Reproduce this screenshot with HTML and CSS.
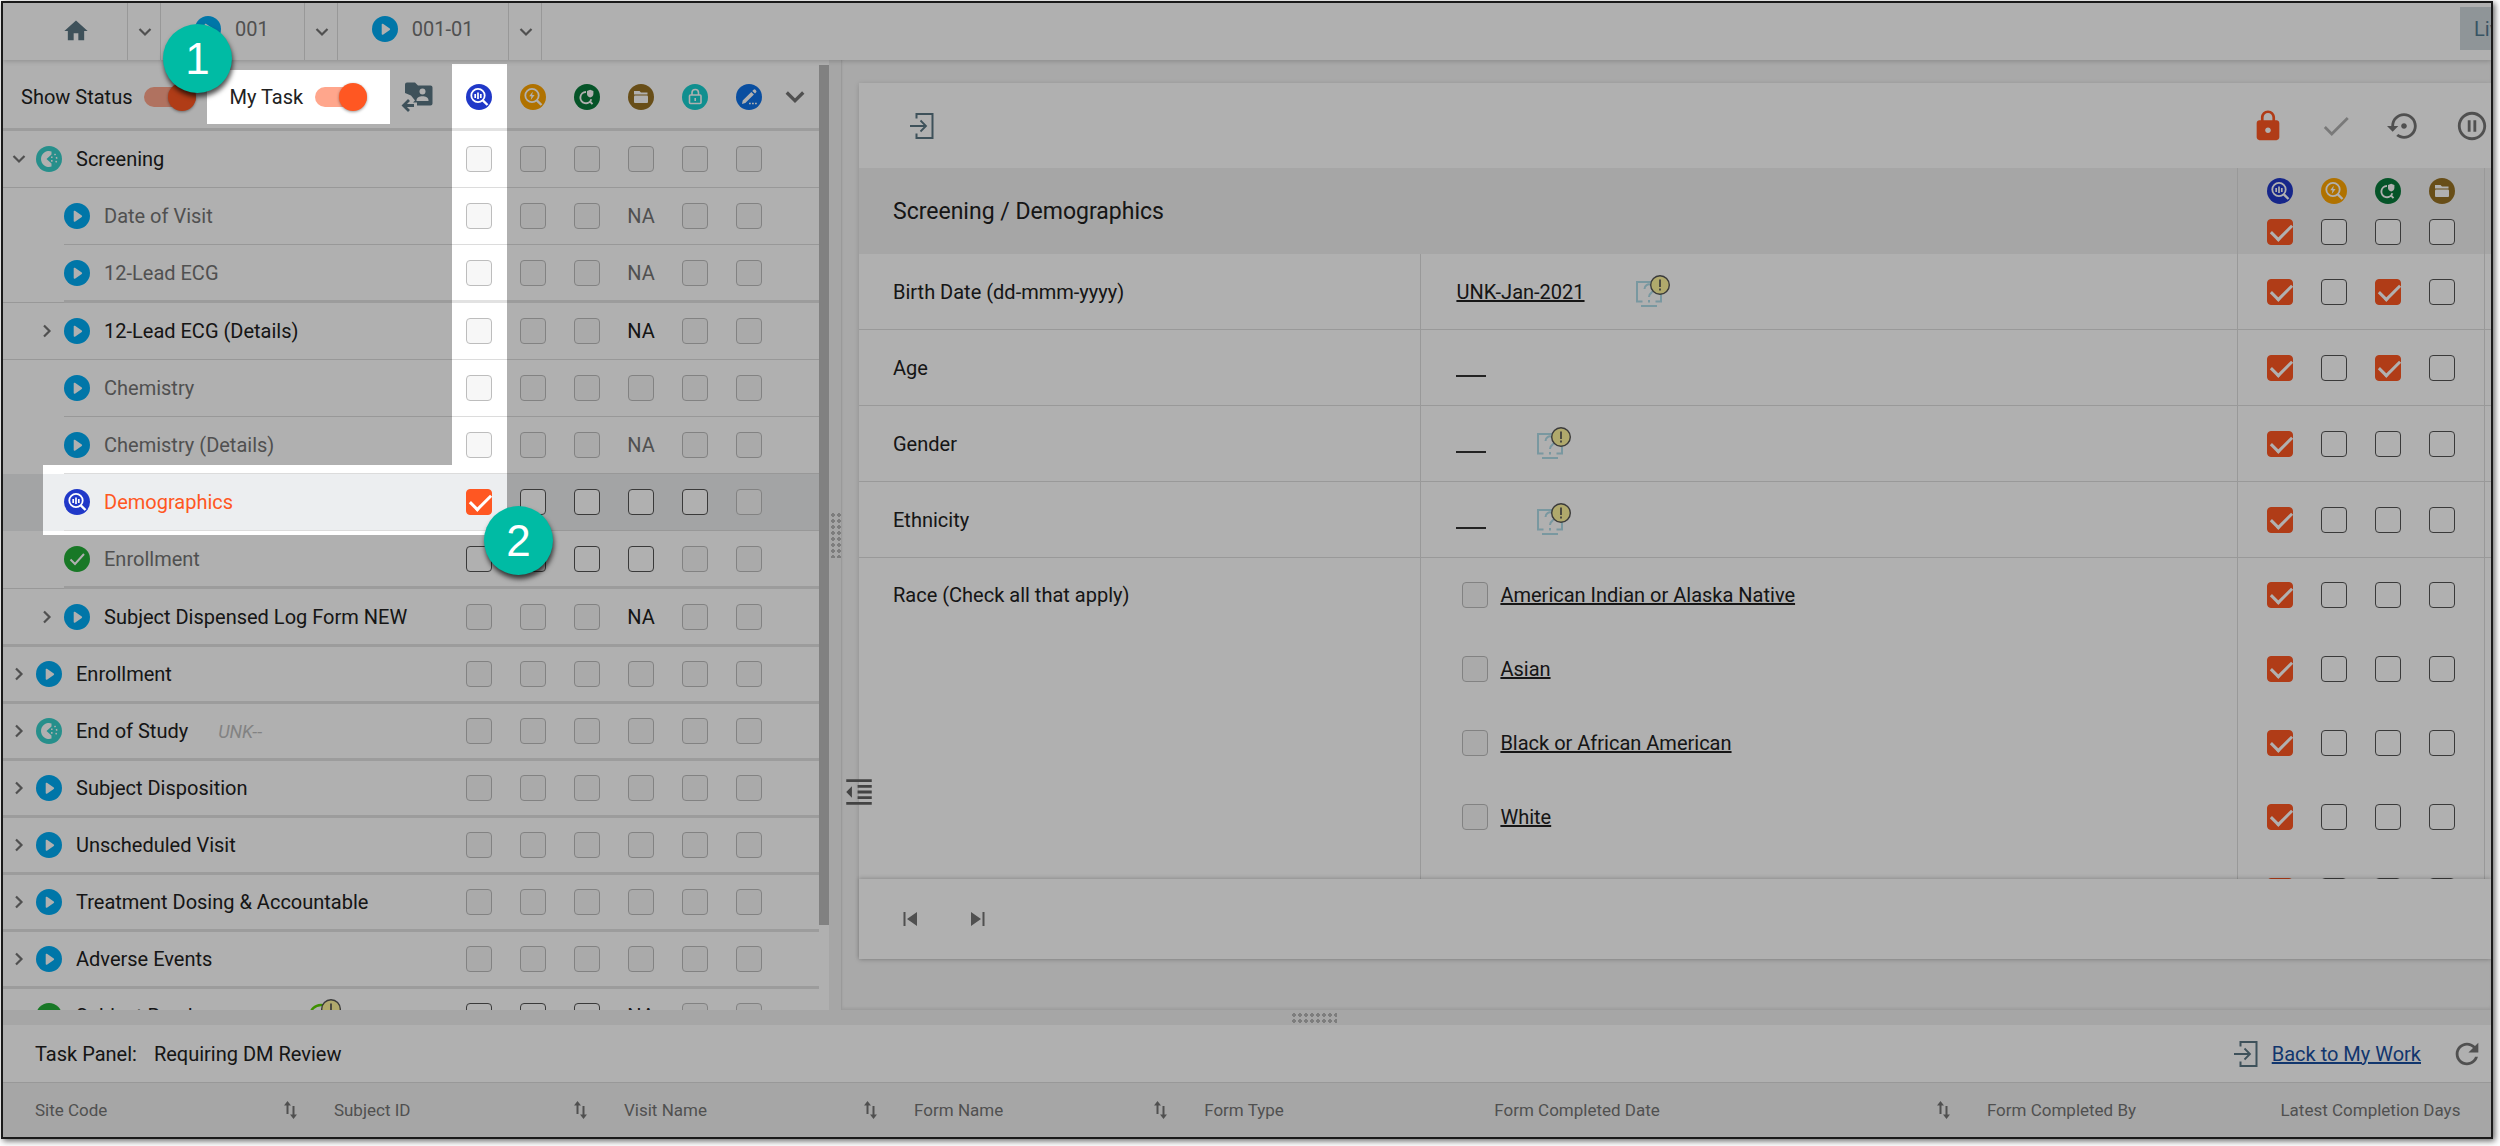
FILE: index.html
```html
<!DOCTYPE html>
<html lang="en">
<head>
    <meta charset="UTF-8">
    <meta name="viewport" content="width=device-width, initial-scale=1.0">
    <title>Subject 001-01</title>
    <link rel="stylesheet" href="styles.css">
</head>
<body>
    <svg class="sprite" aria-hidden="true">
        <symbol id="home" viewBox="0 0 24 24"><path d="M10 20v-6h4v6h5v-8h3L12 3 2 12h3v8z"/></symbol>
        <symbol id="down" viewBox="0 0 16 16"><path d="M2.5 5l5.5 5.5L13.5 5" fill="none" stroke="currentColor" stroke-width="2.2"/></symbol>
        <symbol id="right" viewBox="0 0 16 16"><path d="M5 2.5l5.5 5.5L5 13.5" fill="none" stroke="currentColor" stroke-width="2.2"/></symbol>
        <symbol id="play" viewBox="0 0 26 26"><circle cx="13" cy="13" r="13" fill="#00acf4"/><path d="M10.500 8.500v9.500l6.800-4.750z" fill="#fff" stroke="#fff" stroke-width="1.600" stroke-linejoin="round"/></symbol>
        <symbol id="partial" viewBox="0 0 26 26"><circle cx="13" cy="13" r="13" fill="#37d0ca"/><path d="M15.500 5.400a8 8 0 1 0 0 15.200v-3.100L10.500 13l5-4.500z" fill="#fff"/><path d="M18.500 8a6.800 6.800 0 0 1 0 10M15.800 10.500v6" fill="none" stroke="#fff" stroke-width="1.500" stroke-dasharray="1.600 2"/></symbol>
        <symbol id="done" viewBox="0 0 26 26"><circle cx="13" cy="13" r="13" fill="#23ae37"/><path d="M6.500 13.500l4.500 4.500 9-10" fill="none" stroke="#fff" stroke-width="2"/></symbol>
        <symbol id="review" viewBox="0 0 26 26"><circle cx="13" cy="13" r="13" fill="#2038c8"/><circle cx="12" cy="11.500" r="6.700" fill="none" stroke="#fff" stroke-width="1.800"/><path d="M16.800 16.300l4.700 4.700" stroke="#fff" stroke-width="2.400"/><path d="M9.200 10v4M12 8.500v6.500M14.800 10v4" stroke="#fff" stroke-width="1.700"/></symbol>
        <symbol id="flash" viewBox="0 0 26 26"><circle cx="13" cy="13" r="13" fill="#ffa500"/><circle cx="12" cy="11.500" r="6.700" fill="none" stroke="#fff" stroke-width="1.800"/><path d="M16.800 16.300l4.700 4.700" stroke="#fff" stroke-width="2.400"/><path d="M12.800 7.500l-3.600 4.800h2.200l-.6 3.700 3.800-5h-2.400z" fill="#fff"/></symbol>
        <symbol id="verify" viewBox="0 0 26 26"><circle cx="13" cy="13" r="13" fill="#087a3a"/><path d="M12 8a5.600 5.600 0 1 0 5.300 7.300M15.500 17l3 3.200" fill="none" stroke="#fff" stroke-width="1.900"/><path d="M13 7l3.200-1.200L19.400 7v3c0 1.800-1.400 3-3.200 3.600-1.800-.6-3.200-1.800-3.200-3.600z" fill="#fff"/></symbol>
        <symbol id="folder" viewBox="0 0 26 26"><circle cx="13" cy="13" r="13" fill="#977123"/><path d="M6 7h5.500l1.500 1.500h6.500v2H6z" fill="#fff"/><rect x="6" y="11.500" width="14" height="7.500" rx="1" fill="#fff"/></symbol>
        <symbol id="freeze" viewBox="0 0 26 26"><circle cx="13" cy="13" r="13" fill="#18cfcf"/><rect x="7.500" y="11" width="11.500" height="8.500" rx="1" fill="none" stroke="#fff" stroke-width="1.600"/><path d="M10 11V8.800a3.200 3.200 0 0 1 6.500 0V11M13.200 14v3" fill="none" stroke="#fff" stroke-width="1.600"/></symbol>
        <symbol id="sign" viewBox="0 0 26 26"><circle cx="13" cy="13" r="13" fill="#0e72e8"/><path d="M6 20l.7-3.500 8.600-8.600 2.600 2.600-8.600 8.600zM16.300 7l1-1a1.500 1.500 0 0 1 2.400 0l.3.400a1.500 1.500 0 0 1 0 2.200l-1 1z" fill="#fff"/><path d="M13 19.500h8" stroke="#fff" stroke-width="1.500" stroke-dasharray="1.800 1.200"/></symbol>
        <symbol id="assign" viewBox="0 0 34 34"><path d="M5 13V4.500A2 2 0 0 1 7 2.500h8l3 3h12.500a2 2 0 0 1 2 2v16a2 2 0 0 1-2 2H17v-3h-4l2-2-4-5z"/><circle cx="22.500" cy="11.500" r="3" fill="#fff"/><path d="M16.500 20.500c0-3 3-4.200 6-4.200s6 1.200 6 4.200v.5h-12z" fill="#fff"/><path d="M14 25.500H4.500M9 20l-5.500 5.500L9 31" fill="none" stroke="currentColor" stroke-width="2.800"/></symbol>
        <symbol id="exit" viewBox="0 0 24 28"><path d="M6.500 6.500V2h16v24h-16v-4.500" fill="none" stroke="currentColor" stroke-width="2"/><path d="M0 14h14.500M10.500 8.500L16 14l-5.500 5.500" fill="none" stroke="currentColor" stroke-width="1.800"/></symbol>
        <symbol id="lock" viewBox="0 0 24 24"><path d="M18 8h-1V6c0-2.760-2.240-5-5-5S7 3.240 7 6v2H6c-1.100 0-2 .9-2 2v10c0 1.100.9 2 2 2h12c1.100 0 2-.9 2-2V10c0-1.100-.9-2-2-2zm-6 9c-1.100 0-2-.9-2-2s.9-2 2-2 2 .9 2 2-.9 2-2 2zm3.100-9H8.900V6c0-1.710 1.390-3.100 3.100-3.100s3.100 1.390 3.100 3.100v2z"/></symbol>
        <symbol id="check" viewBox="0 0 24 24"><path d="M9 16.170L4.830 12l-1.420 1.410L9 19 21 7l-1.410-1.410z"/></symbol>
        <symbol id="restore" viewBox="0 0 24 24"><path d="M14 12c0-1.100-.9-2-2-2s-2 .9-2 2 .9 2 2 2 2-.9 2-2zm-2-9c-4.970 0-9 4.030-9 9H0l4 4 4-4H5c0-3.870 3.130-7 7-7s7 3.130 7 7-3.130 7-7 7c-1.510 0-2.910-.49-4.060-1.300l-1.420 1.440C8.040 20.300 9.940 21 12 21c4.970 0 9-4.030 9-9s-4.030-9-9-9z"/></symbol>
        <symbol id="pause" viewBox="0 0 24 24"><path d="M9 16h2V8H9v8zm3-14C6.480 2 2 6.480 2 12s4.480 10 10 10 10-4.480 10-10S17.520 2 12 2zm0 18c-4.410 0-8-3.590-8-8s3.590-8 8-8 8 3.590 8 8-3.590 8-8 8zm1-4h2V8h-2v8z"/></symbol>
        <symbol id="refresh" viewBox="0 0 24 24"><path d="M17.650 6.350C16.200 4.900 14.210 4 12 4c-4.420 0-7.990 3.580-7.990 8s3.570 8 7.990 8c3.730 0 6.840-2.550 7.730-6h-2.080c-.82 2.330-3.040 4-5.650 4-3.310 0-6-2.690-6-6s2.690-6 6-6c1.660 0 3.140.69 4.220 1.780L13 11h7V4l-2.350 2.350z"/></symbol>
        <symbol id="outdent" viewBox="0 0 24 24"><path d="M11 17h10v-2H11v2zm-8-5l4 4V8l-4 4zm0 9h18v-2H3v2zM3 3v2h18V3H3zm8 6h10V7H11v2zm0 4h10v-2H11v2z"/></symbol>
        <symbol id="first" viewBox="0 0 16 16"><path d="M1.500 1h2v14h-2zM15 1v14L5 8z"/></symbol>
        <symbol id="last" viewBox="0 0 16 16"><path d="M12.500 1h2v14h-2zM1 1v14l10-7z"/></symbol>
        <symbol id="sort" viewBox="0 0 18 20"><path d="M5.500 1L2 5.500h2.500V14h2V5.500H9zM10.500 6v8.500H8l3.500 4.500 3.500-4.500h-2.500V6z"/></symbol>
        <symbol id="query" viewBox="0 0 36 34"><path d="M7.500 26.500H2V7h24v19.500h-5.500M6 31h16" fill="none" stroke="#b0dce8" stroke-width="2"/><path d="M9.500 14a4.500 4.500 0 1 1 7 3.600c-1.700 1.200-2.500 2-2.500 4.400M14 25v2.500" fill="none" stroke="#b0dce8" stroke-width="2"/><circle cx="25" cy="10" r="9.300" fill="#fff59d" stroke="#555" stroke-width="1.400"/><path d="M25 4.500v7.500M25 13.500v2" stroke="#555" stroke-width="1.700"/></symbol>
        <symbol id="answer" viewBox="0 0 36 34"><circle cx="15" cy="17" r="11" fill="none" stroke="#5ad200" stroke-width="2.400"/><circle cx="25" cy="10" r="9.300" fill="#fff59d" stroke="#555" stroke-width="1.400"/><path d="M25 4.500v7.500M25 13.500v2" stroke="#555" stroke-width="1.700"/></symbol>
    </svg>

    <div class="frame">
        <nav class="topbar">
            <button class="crumb home" aria-label="Home"><svg class="i28"><use href="#home"/></svg></button>
            <button class="more" aria-label="Sites"><svg class="i16"><use href="#down"/></svg></button>
            <button class="crumb"><svg class="i26"><use href="#play"/></svg>001</button>
            <button class="more" aria-label="Subjects"><svg class="i16"><use href="#down"/></svg></button>
            <button class="crumb"><svg class="i26"><use href="#play"/></svg>001-01</button>
            <button class="more" aria-label="Visits"><svg class="i16"><use href="#down"/></svg></button>
            <button class="live">Live</button>
        </nav>

        <main class="main">
            <section class="visits">
                <table class="tree">
                    <colgroup>
                        <col class="col-gap"><col>
                        <col class="col-box"><col class="col-box"><col class="col-box">
                        <col class="col-box"><col class="col-box"><col class="col-box">
                        <col class="col-end">
                    </colgroup>
                    <thead>
                        <tr>
                            <th colspan="2">
                                <div class="switches">
                                    <label class="switch">Show Status <input type="checkbox" checked></label>
                                    <label class="switch">My Task <input type="checkbox" checked></label>
                                    <button class="slate" aria-label="Assign"><svg class="i34"><use href="#assign"/></svg></button>
                                </div>
                            </th>
                            <th><svg class="i26"><use href="#review"/></svg></th>
                            <th><svg class="i26"><use href="#flash"/></svg></th>
                            <th><svg class="i26"><use href="#verify"/></svg></th>
                            <th><svg class="i26"><use href="#folder"/></svg></th>
                            <th><svg class="i26"><use href="#freeze"/></svg></th>
                            <th><svg class="i26"><use href="#sign"/></svg></th>
                            <th class="expand"><button aria-label="Expand all"><svg class="i24"><use href="#down"/></svg></button></th>
                        </tr>
                    </thead>
                    <tbody id="tree"></tbody>
                </table>
            </section>
            <div class="scroll"><div class="thumb"></div></div>
            <div class="splitter"><span class="grip"></span></div>

            <section class="content">
                <button class="collapse" aria-label="Collapse"><svg class="i34"><use href="#outdent"/></svg></button>
                <div class="card">
                    <div class="tools">
                        <button class="slate leave" aria-label="Leave form"><svg class="i28"><use href="#exit"/></svg></button>
                        <button class="locked" aria-label="Lock"><svg class="i34"><use href="#lock"/></svg></button>
                        <button class="muted" aria-label="Complete"><svg class="i34"><use href="#check"/></svg></button>
                        <button aria-label="History"><svg class="i34"><use href="#restore"/></svg></button>
                        <button aria-label="Pause"><svg class="i34"><use href="#pause"/></svg></button>
                    </div>
                    <div class="form">
                        <table class="fields">
                            <colgroup><col class="col-label"><col><col class="col-checks"><col class="col-edge"></colgroup>
                            <thead>
                                <tr>
                                    <th colspan="2">Screening / Demographics</th>
                                    <th class="side">
                                        <div class="checks">
                                            <svg class="i26"><use href="#review"/></svg>
                                            <svg class="i26"><use href="#flash"/></svg>
                                            <svg class="i26"><use href="#verify"/></svg>
                                            <svg class="i26"><use href="#folder"/></svg>
                                        </div>
                                        <div class="checks" data-checks="1000" data-name="All fields"></div>
                                    </th>
                                    <th class="side"></th>
                                </tr>
                            </thead>
                            <tbody>
                                <tr>
                                    <td>Birth Date (dd-mmm-yyyy)</td>
                                    <td><div class="value"><a href="#">UNK-Jan-2021</a><svg class="query"><use href="#query"/></svg></div></td>
                                    <td class="side"><div class="checks" data-checks="1010" data-name="Birth Date"></div></td>
                                    <td class="side"></td>
                                </tr>
                                <tr>
                                    <td>Age</td>
                                    <td><div class="value"><a href="#" class="blank" aria-label="Age"></a></div></td>
                                    <td class="side"><div class="checks" data-checks="1010" data-name="Age"></div></td>
                                    <td class="side"></td>
                                </tr>
                                <tr>
                                    <td>Gender</td>
                                    <td><div class="value"><a href="#" class="blank" aria-label="Gender"></a><svg class="query"><use href="#query"/></svg></div></td>
                                    <td class="side"><div class="checks" data-checks="1000" data-name="Gender"></div></td>
                                    <td class="side"></td>
                                </tr>
                                <tr>
                                    <td>Ethnicity</td>
                                    <td><div class="value"><a href="#" class="blank" aria-label="Ethnicity"></a><svg class="query"><use href="#query"/></svg></div></td>
                                    <td class="side"><div class="checks" data-checks="1000" data-name="Ethnicity"></div></td>
                                    <td class="side"></td>
                                </tr>
                                <tr class="multi">
                                    <td><div class="line">Race (Check all that apply)</div></td>
                                    <td>
                                        <div class="line option"><input type="checkbox" class="box" id="race1" disabled><label for="race1">American Indian or Alaska Native</label></div>
                                        <div class="line option"><input type="checkbox" class="box" id="race2" disabled><label for="race2">Asian</label></div>
                                        <div class="line option"><input type="checkbox" class="box" id="race3" disabled><label for="race3">Black or African American</label></div>
                                        <div class="line option"><input type="checkbox" class="box" id="race4" disabled><label for="race4">White</label></div>
                                    </td>
                                    <td class="side">
                                        <div class="line checks" data-checks="1000" data-name="Race 1"></div>
                                        <div class="line checks" data-checks="1000" data-name="Race 2"></div>
                                        <div class="line checks" data-checks="1000" data-name="Race 3"></div>
                                        <div class="line checks" data-checks="1000" data-name="Race 4"></div>
                                        <div class="line checks" data-checks="1000" data-name="Race 5"></div>
                                    </td>
                                    <td class="side"></td>
                                </tr>
                            </tbody>
                        </table>
                    </div>
                    <div class="pager">
                        <button aria-label="First form"><svg class="i16"><use href="#first"/></svg></button>
                        <button aria-label="Last form"><svg class="i16"><use href="#last"/></svg></button>
                    </div>
                </div>
            </section>
        </main>

        <div class="splitter flat"><span class="grip"></span></div>

        <section class="tasks">
            <header class="tasks-head">
                <span>Task Panel:</span>
                <span>Requiring DM Review</span>
                <a href="#" class="back"><svg class="i28"><use href="#exit"/></svg><span>Back to My Work</span></a>
                <button aria-label="Refresh"><svg class="i34"><use href="#refresh"/></svg></button>
            </header>
            <table class="list">
                <colgroup><col class="w-site"><col class="w-col"><col class="w-col"><col class="w-col"><col class="w-col"><col class="w-date"><col class="w-by"><col></colgroup>
                <thead>
                    <tr>
                        <th><div>Site Code<svg><use href="#sort"/></svg></div></th>
                        <th><div>Subject ID<svg><use href="#sort"/></svg></div></th>
                        <th><div>Visit Name<svg><use href="#sort"/></svg></div></th>
                        <th><div>Form Name<svg><use href="#sort"/></svg></div></th>
                        <th><div>Form Type</div></th>
                        <th><div>Form Completed Date<svg><use href="#sort"/></svg></div></th>
                        <th><div>Form Completed By</div></th>
                        <th><div>Latest Completion Days</div></th>
                    </tr>
                </thead>
            </table>
        </section>

        <div class="shade"></div>
        <div class="step step-1">1</div>
        <div class="step step-2">2</div>
    </div>
    <script src="script.js"></script>
</body>
</html>
```

FILE: styles.css
```css
* {
    box-sizing: border-box;
    margin: 0;
    padding: 0;
}

body {
    background: #fff;
    font-family: Roboto, "Liberation Sans", sans-serif;
    font-size: 20px;
    color: #212121;
    overflow: hidden;
}

button {
    border: 0;
    background: none;
    font: inherit;
    color: #757575;
    cursor: pointer;
}

svg {
    display: block;
    fill: currentColor;
    flex: none;
}

a {
    color: inherit;
}

table {
    width: 100%;
    table-layout: fixed;
    border-collapse: separate;
    border-spacing: 0;
}

th {
    font-weight: normal;
    text-align: left;
}

.sprite {
    position: absolute;
    width: 0;
    height: 0;
}

.i16 { width: 16px; height: 16px; }
.i24 { width: 24px; height: 24px; }
.i26 { width: 26px; height: 26px; }
.i28 { width: 28px; height: 28px; }
.i34 { width: 34px; height: 34px; }

.slate { color: #5a7683; }
.locked { color: #ff5722; }
.muted { color: #b0b0b0; }

.frame {
    position: relative;
    display: flex;
    flex-direction: column;
    height: calc(100vh - 8px);
    margin: 1px 7px 7px 1px;
    border: 2px solid #1a1a1a;
    box-shadow: 2px 2px 6px rgba(0, 0, 0, .6);
    overflow: hidden;
}

/* top bar */
.topbar {
    display: flex;
    height: 57px;
    flex: none;
    background: #fff;
    box-shadow: 0 1px 5px rgba(0, 0, 0, .2);
    z-index: 1;
}

.crumb {
    display: flex;
    align-items: center;
    gap: 14px;
    padding: 0 35px 6px 34px;
    border-right: 1px solid #ddd;
}

.home {
    padding: 0 37px 2px 59px;
    color: #5a7683;
}

.more {
    width: 33px;
    padding-left: 9px;
    border-right: 1px solid #ddd;
}

.live {
    width: 84px;
    height: 43px;
    margin: 4px -53px 0 auto;
    padding-left: 14px;
    background: #cfd8dc;
    color: #527a90;
    text-align: left;
}

/* tree */
.main {
    display: flex;
    flex: 1;
    min-height: 0;
}

.visits {
    width: 816px;
    flex: none;
    background: #fff;
    overflow: hidden;
}

.col-gap { width: 61px; }
.col-box { width: 54px; }
.col-end { width: 43px; }

.tree th {
    height: 71px;
    padding-top: 5px;
    border-bottom: 3px solid #e2e2e2;
}

.tree td {
    height: 57px;
    border-bottom: 1px solid #dcdcdc;
}

.tree th > svg,
.tree .box {
    margin: 0 auto;
}

.tree .leaf .gap {
    border-bottom: 0;
}

.tree .group td,
.tree .thick td {
    border-bottom: 3px solid #e2e2e2;
}

.tree .thick td {
    height: 58px;
}

.tree .open td {
    border-bottom: 1px solid #dcdcdc;
}

.tree .leaf.thick .gap {
    border-bottom: 1px solid #dcdcdc;
}

.tree .selected td {
    background: #eceef0;
}

.tree .selected .name {
    color: #ff5722;
}

.name {
    display: flex;
    align-items: center;
    gap: 14px;
    white-space: nowrap;
}

.leaf {
    color: #757575;
}

.group .name {
    padding-left: 8px;
}

.name .arrow {
    margin-right: -5px;
    color: #757575;
}

.gap .arrow {
    margin-left: 36px;
    color: #757575;
}

.name em {
    margin-left: 16px;
    font-size: 18px;
    color: #bdbdbd;
}

.name .query {
    margin-left: 90px;
}

.na {
    text-align: center;
}

.expand button {
    margin: 0 auto 0 7px;
    display: block;
}

.switches {
    display: flex;
    align-items: center;
    gap: 33px;
    padding-left: 18px;
}

.switch {
    display: flex;
    align-items: center;
    gap: 12px;
    cursor: pointer;
}

.switch input {
    appearance: none;
    display: flex;
    align-items: center;
    justify-content: flex-end;
    width: 52px;
    height: 20px;
    border-radius: 10px;
    background: #ffa68c;
}

.switch input::before {
    content: "";
    width: 28px;
    height: 28px;
    flex: none;
    border-radius: 50%;
    background: #ff5722;
    box-shadow: 0 1px 3px rgba(0, 0, 0, .4);
}

/* check boxes */
.box {
    appearance: none;
    display: block;
    width: 26px;
    height: 26px;
    flex: none;
    border: 1px solid #555;
    border-radius: 4px;
    background: #fff;
}

.box:disabled {
    border-color: #bdbdbd;
    background: #f7f7f7;
}

.box:checked {
    border-color: #ff5722;
    background: #ff5722;
}

.box:checked::after {
    content: "";
    display: block;
    width: 18px;
    height: 9px;
    margin: 5px 0 0 3px;
    border-left: 3px solid #fff;
    border-bottom: 3px solid #fff;
    transform: translateY(-1px) rotate(-45deg);
}

/* scroll bar and splitters */
.scroll {
    width: 10px;
    padding-top: 5px;
    background: #fff;
}

.thumb {
    height: 91%;
    background: #bcbcbc;
}

.splitter {
    display: flex;
    align-items: center;
    justify-content: center;
    width: 13px;
    flex: none;
    background: #f1f1f1;
    border-right: 1px solid #e0e0e0;
}

.grip {
    width: 12px;
    height: 45px;
    background: radial-gradient(circle at 2px 2px, #b5b5b5 2px, transparent 2px) 2px 0 / 6px 6px;
}

.splitter.flat {
    width: 105.4%;
    height: 15px;
    border: 0;
}

.flat .grip {
    width: 45px;
    height: 12px;
    background-position: 0 1px;
}

/* form */
.content {
    position: relative;
    flex: 1;
    min-width: 0;
    padding: 23px 0 51px 17px;
    background: #f5f5f5;
    box-shadow: inset 0 -2px 3px rgba(0, 0, 0, .08);
}

.collapse {
    position: absolute;
    left: 0;
    top: 715px;
    color: #616161;
    z-index: 1;
}

.card {
    display: flex;
    flex-direction: column;
    height: 100%;
    background: #fff;
    box-shadow: 0 1px 5px rgba(0, 0, 0, .16);
}

.tools {
    display: flex;
    align-items: center;
    gap: 34px;
    height: 85px;
    flex: none;
    padding: 0 2px 0 49px;
}

.leave {
    margin-right: auto;
}

.form {
    flex: 1;
    min-height: 0;
    overflow: hidden;
}

.col-label { width: 34.4%; }
.col-checks { width: 247px; }
.col-edge { width: 7px; }

.fields th {
    height: 86px;
    padding-left: 34px;
    background: #f1f1f1;
    font-size: 23px;
}

.fields td {
    height: 76px;
    padding-left: 34px;
    border-bottom: 1px solid #dedede;
}

.fields td + td {
    padding-left: 35px;
    border-left: 1px solid #dedede;
}

.fields th.side,
.fields td.side {
    padding-left: 29px;
    border-left: 1px solid #dedede;
}

.fields .side:last-child {
    padding-left: 0;
}

.value {
    display: flex;
    align-items: center;
    gap: 50px;
}

.blank {
    width: 30px;
    height: 18px;
    border-bottom: 2px solid #333;
}

.query {
    width: 36px;
    height: 34px;
}

.checks {
    display: flex;
    gap: 28px;
}

th .checks + .checks {
    margin-top: 15px;
}

.fields .multi td {
    vertical-align: top;
    border-bottom: 0;
}

.line {
    display: flex;
    align-items: center;
    height: 74px;
}

.option {
    gap: 12px;
    padding-left: 6px;
}

.option label {
    text-decoration: underline;
}

.pager {
    display: flex;
    align-items: center;
    gap: 52px;
    height: 80px;
    flex: none;
    padding-left: 43px;
    box-shadow: 0 -1px 4px rgba(0, 0, 0, .2);
    background: #fff;
    z-index: 0;
}

/* task panel */
.tasks {
    flex: none;
    background: #fff;
}

.tasks-head {
    display: flex;
    align-items: center;
    gap: 17px;
    height: 57px;
    padding: 0 7px 0 32px;
}

.back {
    display: flex;
    align-items: center;
    gap: 12px;
    margin-left: auto;
    color: #5a7683;
    text-decoration: none;
}

.back span {
    color: #1a4fa0;
    text-decoration: underline;
}

.tasks-head button {
    margin-left: 12px;
}

.w-site { width: 13.3%; }
.w-col { width: 11.66%; }
.w-date { width: 19.8%; }
.w-by { width: 11.8%; }

.list th {
    height: 55px;
    background: #f1f1f1;
    border-top: 1px solid #ddd;
    font-size: 17px;
    color: #757575;
    white-space: nowrap;
}

.list th:first-child {
    padding-left: 32px;
}

.list div {
    display: flex;
    align-items: center;
    justify-content: space-between;
    padding-right: 34px;
}

.list svg {
    width: 18px;
    height: 20px;
}

/* dimmed page with the highlighted areas cut out */
.shade {
    position: absolute;
    inset: 0;
    z-index: 2;
    background: rgba(0, 0, 0, .31);
    pointer-events: none;
    clip-path: polygon(evenodd,
        0 0, 100% 0, 100% 100%, 0 100%, 0 0,
        204px 67px, 387px 67px, 387px 121px, 204px 121px, 204px 67px,
        0 0,
        449px 61px, 504px 61px, 504px 532px, 40px 532px, 40px 462px, 449px 462px, 449px 61px,
        0 0);
}

.step {
    position: absolute;
    z-index: 3;
    width: 69px;
    height: 69px;
    border-radius: 50%;
    background: #00bba4;
    box-shadow: 1px 4px 5px rgba(0, 0, 0, .7);
    font: 44px/69px "Liberation Sans", sans-serif;
    text-align: center;
    color: #fff;
}

.step-1 {
    left: 160px;
    top: 21px;
}

.step-2 {
    left: 481px;
    top: 503px;
}
```

FILE: script.js
```js
// boxes: "-" disabled, "o" empty, "x" ticked, "N" not applicable
const rows = [
    { name: "Screening", type: "group open", icon: "partial", arrow: "down", boxes: "------" },
    { name: "Date of Visit", type: "leaf", icon: "play", boxes: "---N--" },
    { name: "12-Lead ECG", type: "leaf thick", icon: "play", boxes: "---N--" },
    { name: "12-Lead ECG (Details)", type: "log", icon: "play", arrow: "right", boxes: "---N--" },
    { name: "Chemistry", type: "leaf", icon: "play", boxes: "------" },
    { name: "Chemistry (Details)", type: "leaf", icon: "play", boxes: "---N--" },
    { name: "Demographics", type: "leaf selected", icon: "review", boxes: "xoooo-" },
    { name: "Enrollment", type: "leaf thick", icon: "done", boxes: "oooo--" },
    { name: "Subject Dispensed Log Form NEW", type: "log thick", icon: "play", arrow: "right", boxes: "---N--" },
    { name: "Enrollment", type: "group", icon: "play", arrow: "right", boxes: "------" },
    { name: "End of Study", type: "group", icon: "partial", arrow: "right", note: "UNK--", boxes: "------" },
    { name: "Subject Disposition", type: "group", icon: "play", arrow: "right", boxes: "------" },
    { name: "Unscheduled Visit", type: "group", icon: "play", arrow: "right", boxes: "------" },
    { name: "Treatment Dosing & Accountable", type: "group", icon: "play", arrow: "right", boxes: "------" },
    { name: "Adverse Events", type: "group", icon: "play", arrow: "right", boxes: "------" },
    { name: "Subject Ready", type: "group", icon: "done", query: true, boxes: "oooN--" }
];
const columns = ["Review", "Quick review", "Verify", "Archive", "Freeze", "Sign"];

const icon = (id, cls) => `<svg class="${cls}"><use href="#${id}"/></svg>`;

const box = (c, label) => {
    const state = c === "-" ? "disabled" : c === "x" || c === "1" ? "checked" : "";
    return `<input type="checkbox" class="box" aria-label="${label}" ${state}>`;
};

document.getElementById("tree").innerHTML = rows.map(row => {
    const group = row.type.startsWith("group");
    const name = row.name.replace("&", "&amp;");
    const arrow = row.arrow ? icon(row.arrow, "i16 arrow") : "";
    const blank = group && !row.arrow ? icon("", "i16 arrow") : "";
    const cells = [...row.boxes].map((c, i) =>
        c === "N" ? `<td class="na">NA</td>` : `<td>${box(c, name + " " + columns[i])}</td>`
    ).join("");
    return `<tr class="${row.type}">
        ${group ? "" : `<td class="gap">${arrow}</td>`}
        <td ${group ? 'colspan="2"' : ""}><div class="name">
            ${group ? arrow + blank : ""}${icon(row.icon, "i26")}<span>${name}</span>
            ${row.note ? `<em>${row.note}</em>` : ""}${row.query ? icon("answer", "query") : ""}
        </div></td>
        ${cells}<td></td>
    </tr>`;
}).join("");

document.querySelectorAll("[data-checks]").forEach(el => {
    el.innerHTML = [...el.dataset.checks].map((c, i) => box(c, el.dataset.name + " " + columns[i])).join("");
});
```
